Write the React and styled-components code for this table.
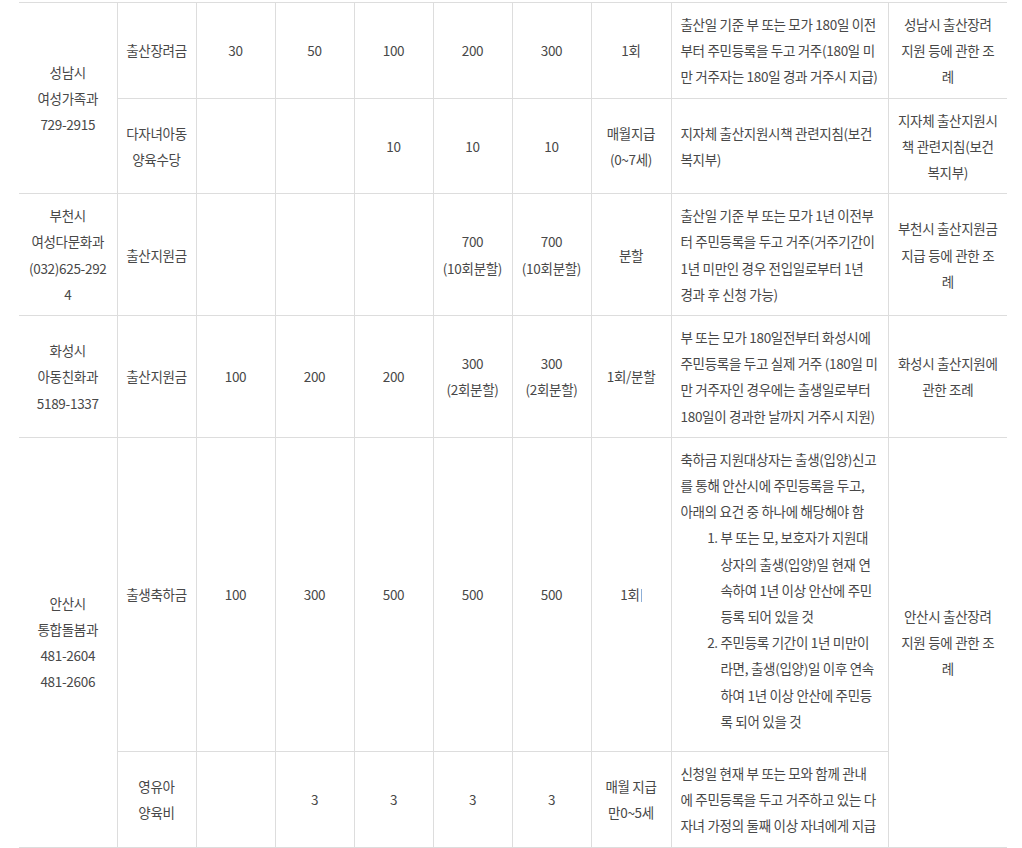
import React from 'react';
import styled, { createGlobalStyle } from 'styled-components';

const GlobalStyle = createGlobalStyle`
  body {
    margin: 0;
    background: #fff;
  }
`;

const Page = styled.div`
  padding: 2px 15px 0 19px;
`;

const Table = styled.table`
  width: 988px;
  table-layout: fixed;
  border-collapse: collapse;
  border-left: hidden;
  border-right: hidden;
  font-family: "Noto Sans CJK KR", sans-serif;
  font-size: 13.5px;
  letter-spacing: -0.3px;
  color: #484848;
`;

const Col = styled.col`
  width: ${p => p.$w}px;
`;

const Cell = styled.td`
  border: 1px solid #ddd;
  padding: ${p => (p.$left ? '8px 9px' : '8px 4px')};
  line-height: 26.2px;
  text-align: ${p => (p.$left ? 'left' : 'center')};
  vertical-align: middle;
  white-space: nowrap;
`;

const Steps = styled.ol`
  margin: 0 0 9px;
  padding-left: 40px;
`;

const Caret = styled.span`
  display: inline-block;
  width: 1px;
  height: 13px;
  margin-left: 1px;
  vertical-align: -2px;
  background: #8fb0d8;
`;

const widths = [98, 79, 79, 79, 79, 79, 79, 80, 217, 119];

export default function App() {
  return (
    <>
      <GlobalStyle />
      <Page>
        <Table>
          <colgroup>
            {widths.map((w, i) => <Col key={i} $w={w} />)}
          </colgroup>
          <tbody>
            {/* 성남시 */}
            <tr>
              <Cell rowSpan={2}>성남시<br />여성가족과<br />729-2915</Cell>
              <Cell>출산장려금</Cell>
              <Cell>30</Cell>
              <Cell>50</Cell>
              <Cell>100</Cell>
              <Cell>200</Cell>
              <Cell>300</Cell>
              <Cell>1회</Cell>
              <Cell $left>
                출산일 기준 부 또는 모가 180일 이전<br />
                부터 주민등록을 두고 거주(180일 미<br />
                만 거주자는 180일 경과 거주시 지급)
              </Cell>
              <Cell>성남시 출산장려<br />지원 등에 관한 조<br />례</Cell>
            </tr>
            <tr>
              <Cell>다자녀아동<br />양육수당</Cell>
              <Cell />
              <Cell />
              <Cell>10</Cell>
              <Cell>10</Cell>
              <Cell>10</Cell>
              <Cell>매월지급<br />(0~7세)</Cell>
              <Cell $left>지자체 출산지원시책 관련지침(보건<br />복지부)</Cell>
              <Cell>지자체 출산지원시<br />책 관련지침(보건<br />복지부)</Cell>
            </tr>

            {/* 부천시 */}
            <tr>
              <Cell>부천시<br />여성다문화과<br />(032)625-292<br />4</Cell>
              <Cell>출산지원금</Cell>
              <Cell />
              <Cell />
              <Cell />
              <Cell>700<br />(10회분할)</Cell>
              <Cell>700<br />(10회분할)</Cell>
              <Cell>분할</Cell>
              <Cell $left>
                출산일 기준 부 또는 모가 1년 이전부<br />
                터 주민등록을 두고 거주(거주기간이<br />
                1년 미만인 경우 전입일로부터 1년<br />
                경과 후 신청 가능)
              </Cell>
              <Cell>부천시 출산지원금<br />지급 등에 관한 조<br />례</Cell>
            </tr>

            {/* 화성시 */}
            <tr>
              <Cell>화성시<br />아동친화과<br />5189-1337</Cell>
              <Cell>출산지원금</Cell>
              <Cell>100</Cell>
              <Cell>200</Cell>
              <Cell>200</Cell>
              <Cell>300<br />(2회분할)</Cell>
              <Cell>300<br />(2회분할)</Cell>
              <Cell>1회/분할</Cell>
              <Cell $left>
                부 또는 모가 180일전부터 화성시에<br />
                주민등록을 두고 실제 거주 (180일 미<br />
                만 거주자인 경우에는 출생일로부터<br />
                180일이 경과한 날까지 거주시 지원)
              </Cell>
              <Cell>화성시 출산지원에<br />관한 조례</Cell>
            </tr>

            {/* 안산시 */}
            <tr>
              <Cell rowSpan={2}>안산시<br />통합돌봄과<br />481-2604<br />481-2606</Cell>
              <Cell>출생축하금</Cell>
              <Cell>100</Cell>
              <Cell>300</Cell>
              <Cell>500</Cell>
              <Cell>500</Cell>
              <Cell>500</Cell>
              <Cell>1회<Caret /></Cell>
              <Cell $left>
                축하금 지원대상자는 출생(입양)신고<br />
                를 통해 안산시에 주민등록을 두고,<br />
                아래의 요건 중 하나에 해당해야 함
                <Steps>
                  <li>
                    부 또는 모, 보호자가 지원대<br />
                    상자의 출생(입양)일 현재 연<br />
                    속하여 1년 이상 안산에 주민<br />
                    등록 되어 있을 것
                  </li>
                  <li>
                    주민등록 기간이 1년 미만이<br />
                    라면, 출생(입양)일 이후 연속<br />
                    하여 1년 이상 안산에 주민등<br />
                    록 되어 있을 것
                  </li>
                </Steps>
              </Cell>
              <Cell rowSpan={2}>안산시 출산장려<br />지원 등에 관한 조<br />례</Cell>
            </tr>
            <tr>
              <Cell>영유아<br />양육비</Cell>
              <Cell />
              <Cell>3</Cell>
              <Cell>3</Cell>
              <Cell>3</Cell>
              <Cell>3</Cell>
              <Cell>매월 지급<br />만0~5세</Cell>
              <Cell $left>
                신청일 현재 부 또는 모와 함께 관내<br />
                에 주민등록을 두고 거주하고 있는 다<br />
                자녀 가정의 둘째 이상 자녀에게 지급
              </Cell>
            </tr>
          </tbody>
        </Table>
      </Page>
    </>
  );
}
